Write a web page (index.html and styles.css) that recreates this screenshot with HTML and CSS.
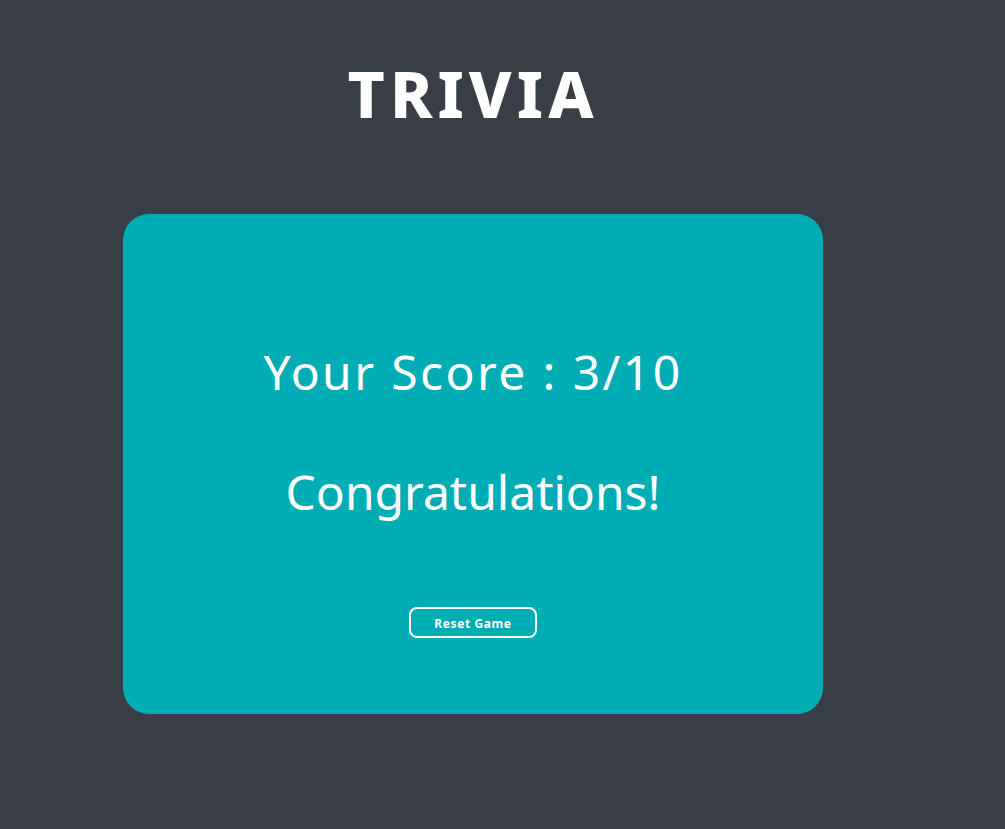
FILE: index.html
```html
<!DOCTYPE html>
<html lang="en">
<head>
<meta charset="utf-8">
<title>Trivia</title>
<link rel="stylesheet" href="styles.css">
</head>
<body>
<main class="app">
  <h1 class="title">TRIVIA</h1>
  <section class="card">
    <p class="score">Your Score : 3/10</p>
    <p class="message">Congratulations!</p>
    <button class="reset" type="button">Reset Game</button>
  </section>
</main>
</body>
</html>
```
FILE: styles.css
```css
html, body {
  margin: 0;
  padding: 0;
}
body {
  background: #393e46;
  color: #ffffff;
  font-family: "Comic Sans MS", "Noto Sans", sans-serif;
  min-height: 829px;
}
.app {
  width: 700px;
  padding-left: 123px;
  display: flex;
  flex-direction: column;
  align-items: center;
}
.title {
  margin: 58px 0 0;
  height: 156px;
  font-size: 64px;
  line-height: 72px;
  font-weight: 800;
  letter-spacing: 5px;
}
.card {
  box-sizing: border-box;
  width: 700px;
  height: 500px;
  background: #00adb5;
  border-radius: 26px;
  display: flex;
  flex-direction: column;
  align-items: center;
  padding-top: 128px;
}
.score, .message {
  margin: 0;
  font-size: 48px;
  line-height: 60px;
  font-weight: 400;
}
.score {
  letter-spacing: 2.4px;
}
.message {
  margin-top: 60px;
}
.reset {
  margin-top: 85px;
  width: 128px;
  height: 31px;
  padding-top: 3px;
  background: transparent;
  border: 2px solid #ffffff;
  border-radius: 8px;
  color: #ffffff;
  font-family: inherit;
  font-size: 12px;
  font-weight: 700;
  letter-spacing: 0.6px;
  cursor: pointer;
}
```
